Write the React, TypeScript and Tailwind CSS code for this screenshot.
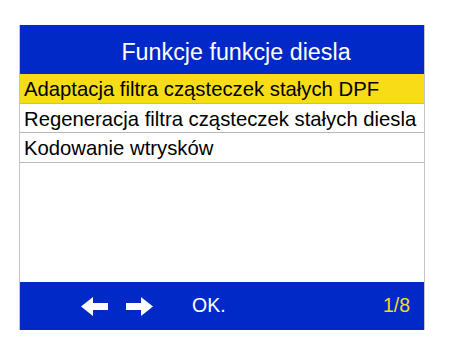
import React from 'react';

const rows = [
  'Adaptacja filtra cząsteczek stałych DPF',
  'Regeneracja filtra cząsteczek stałych diesla',
  'Kodowanie wtrysków',
];

const ArrowLeft = () => (
  <svg width="27" height="19" viewBox="0 0 27 19">
    <polygon points="0,9.5 12,0 12,6 27,6 27,13 12,13 12,19" fill="#ffffff" />
  </svg>
);

const ArrowRight = () => (
  <svg width="27" height="19" viewBox="0 0 27 19">
    <polygon points="27,9.5 15,0 15,6 0,6 0,13 15,13 15,19" fill="#ffffff" />
  </svg>
);

export default function App() {
  return (
    <div className="w-[450px] h-[357px] bg-white pt-[25px] pl-[19px]" style={{ fontFamily: '"Liberation Sans", Arial, sans-serif' }}>
      <div className="w-[406px] h-[305px] flex flex-col border-x border-[#c4c4c4]">
        <div className="h-[49px] bg-[#0029c8] flex items-center justify-center pl-[28px] pt-[5px] text-white text-[23.3px]">
          Funkcje funkcje diesla
        </div>
        {rows.map((r, i) => (
          <div
            key={r}
            className={`h-[29.5px] flex items-center pl-[4px] pt-[2px] text-[20.3px] leading-none text-black border-b border-[#b8b8b8] whitespace-nowrap ${i === 0 ? 'bg-[#f7dc17]' : 'bg-white'}`}
          >
            {r}
          </div>
        ))}
        <div className="flex-1 bg-white" />
        <div className="h-[48px] bg-[#0029c8] flex items-center text-[19.5px] text-white">
          <div className="ml-[61px] flex items-center gap-[18px]">
            <ArrowLeft />
            <ArrowRight />
          </div>
          <span className="ml-[39px]">OK.</span>
          <span className="ml-auto mr-[14px] text-[#f2dc1e]">1/8</span>
        </div>
      </div>
    </div>
  );
}
